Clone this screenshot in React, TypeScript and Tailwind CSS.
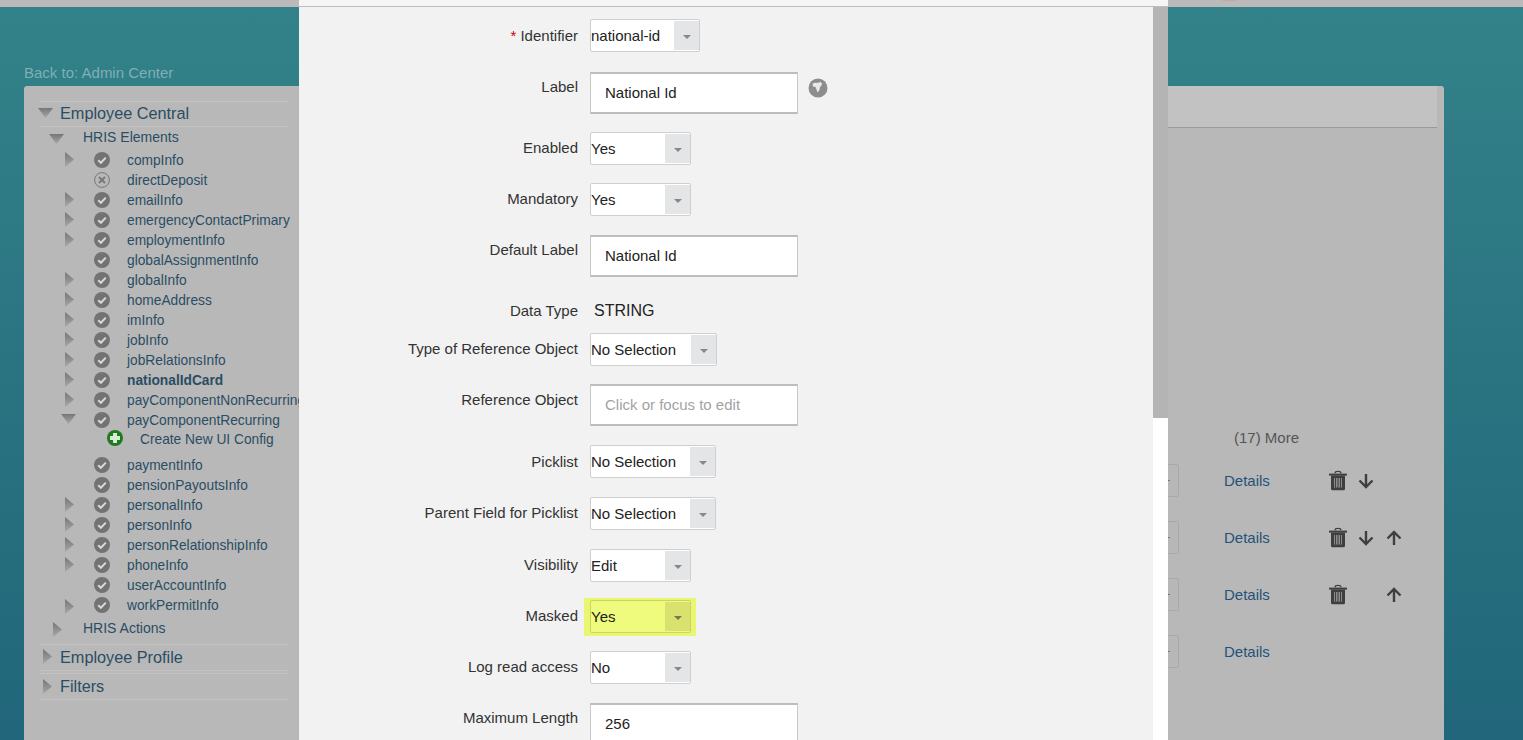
import React from "react";

const font = { fontFamily: '"Liberation Sans", Arial, sans-serif' };

const Tri = ({ dir, className }: { dir: "down" | "right"; className: string }) => (
  <svg className={`shrink-0 ${className}`} viewBox="0 0 16 16" preserveAspectRatio="none">
    <defs>
      <linearGradient id={"g" + dir} x1="0" y1="0" x2="0" y2="1">
        <stop offset="0" stopColor="#767676" />
        <stop offset="1" stopColor="#a8a8a8" />
      </linearGradient>
    </defs>
    {dir === "down" ? <path d="M0 0h16L8 16z" fill="url(#gdown)" /> : <path d="M0 0l16 8-16 8z" fill="url(#gright)" />}
  </svg>
);

const Check = () => (
  <svg className="w-4 h-4 shrink-0" viewBox="0 0 16 16">
    <circle cx="8" cy="8" r="8" fill="#737373" />
    <path d="M4.200 8.200l2.700 2.600 4.900-5.200" fill="none" stroke="#d8d8d8" strokeWidth="2" />
  </svg>
);

const Cross = () => (
  <svg className="w-4 h-4 shrink-0" viewBox="0 0 16 16">
    <circle cx="8" cy="8" r="7.400" fill="none" stroke="#777" strokeWidth="1" />
    <path d="M5 5l6 6M11 5l-6 6" stroke="#777" strokeWidth="1.800" />
  </svg>
);

const Trash = () => (
  <svg className="w-5 h-[21px]" viewBox="0 0 20 21">
    <path d="M7 3.200c0-2.400 6-2.400 6 0" fill="none" stroke="#3f3f3f" strokeWidth="1.200" />
    <path d="M1 3.600h18v2H1z" fill="#3f3f3f" />
    <path d="M3 5.500h14v13.200a1.600 1.600 0 0 1-1.600 1.600H4.600A1.600 1.600 0 0 1 3 18.700z" fill="#3f3f3f" />
    <path d="M6 8h8v9.500H6z" fill="#8c8c8c" />
    <path d="M7.500 8v9.500M10 8v9.500M12.500 8v9.500" stroke="#3f3f3f" strokeWidth="1" />
  </svg>
);

const Arrow = ({ up }: { up?: boolean }) => (
  <svg className="w-4 h-4" viewBox="0 0 16 16">
    <path
      d={up ? "M8 15V2M1.500 8.500L8 2l6.500 6.500" : "M8 1v13M1.500 7.500L8 14l6.500-6.500"}
      fill="none"
      stroke="#3f3f3f"
      strokeWidth="2.400"
    />
  </svg>
);

const Select = ({ value, w, hl }: { value: string; w: string; hl?: boolean }) => (
  <div className={`h-[33px] ${w} flex border rounded-[2px] ${hl ? "bg-[#eefb7d] border-[#c9d36a]" : "bg-white border-[#cfcfcf]"}`}>
    <div className="flex-1 flex items-center pt-[2px] text-[15px] text-[#222] overflow-hidden whitespace-nowrap">{value}</div>
    <div className={`w-[25px] my-[1px] flex items-center justify-center ${hl ? "bg-[#d9e26e]" : "bg-[#e3e5e7]"}`}>
      <div className={`w-0 h-0 mt-[2px] border-x-[4px] border-x-transparent border-t-[4px] ${hl ? "border-t-[#77794a]" : "border-t-[#888]"}`} />
    </div>
  </div>
);

const Input = ({ value, ph }: { value: string; ph?: boolean }) => (
  <div className={`h-[42px] w-[208px] bg-white border border-[#c9c9c9] border-t-2 border-b-2 border-t-[#bdbdbd] border-b-[#bdbdbd] pl-[14px] flex items-center text-[15px] ${ph ? "text-[#a3a3a3] pt-[1px]" : "text-[#222]"}`}>
    {value}
  </div>
);

const Row = ({ label, h, children, req, pt = "pt-2" }: { label: string; h: string; children: React.ReactNode; req?: boolean; pt?: string }) => (
  <div className={`flex ${h}`}>
    <div className={`w-[279px] text-right text-[15px] leading-4 text-[#333] whitespace-nowrap ${pt}`}>
      {req && <span className="text-[#c00]">* </span>}
      {label}
    </div>
    <div className="ml-[12px]">{children}</div>
  </div>
);

type Item = { name: string; tri?: "right" | "down"; icon?: "x"; bold?: boolean; low?: boolean };

const items: Item[] = [
  { name: "compInfo", tri: "right" },
  { name: "directDeposit", icon: "x" },
  { name: "emailInfo", tri: "right" },
  { name: "emergencyContactPrimary", tri: "right" },
  { name: "employmentInfo", tri: "right" },
  { name: "globalAssignmentInfo" },
  { name: "globalInfo", tri: "right" },
  { name: "homeAddress", tri: "right" },
  { name: "imInfo", tri: "right" },
  { name: "jobInfo", tri: "right" },
  { name: "jobRelationsInfo", tri: "right" },
  { name: "nationalIdCard", tri: "right", bold: true },
  { name: "payComponentNonRecurring", tri: "right" },
  { name: "payComponentRecurring", tri: "down" },
];

const items2: Item[] = [
  { name: "paymentInfo" },
  { name: "pensionPayoutsInfo" },
  { name: "personalInfo", tri: "right" },
  { name: "personInfo", tri: "right" },
  { name: "personRelationshipInfo", tri: "right" },
  { name: "phoneInfo", tri: "right" },
  { name: "userAccountInfo" },
  { name: "workPermitInfo", tri: "right", low: true },
];

const TreeRow = ({ item }: { item: Item }) => (
  <div className="h-5 flex items-center">
    <div className="w-[54px] pl-[25px] flex">
      {item.tri === "right" && <Tri dir="right" className={`w-[9px] h-[15px] ${item.low ? "mt-[3px]" : "-mt-[1px]"}`} />}
      {item.tri === "down" && <Tri dir="down" className="w-[15px] h-[10px] -ml-[4px] -mt-[2px]" />}
    </div>
    {item.icon === "x" ? <Cross /> : <Check />}
    <div className={`ml-[17px] mt-[2px] text-[13.75px] whitespace-nowrap text-[#2a4d63] ${item.bold ? "font-bold" : ""}`}>{item.name}</div>
  </div>
);

const DetailRow = ({ down, up, trash }: { down?: boolean; up?: boolean; trash?: boolean }) => (
  <div className="h-[57px] flex items-center">
    <div className="w-[11px] h-[33px] border border-l-0 border-[#a9a9a9] rounded-r-[2px] bg-[#b7b7b7] flex items-center">
      <div className="w-[2px] h-[1px] bg-[#777]" />
    </div>
    <div className="ml-[45px] w-[104px] mt-[2px] text-[15px] text-[#24527a]">Details</div>
    <div className="w-5 flex">{trash && <Trash />}</div>
    <div className="ml-[10px] w-[18px]">{down && <Arrow />}</div>
    <div className="ml-[10px] w-4">{up && <Arrow up />}</div>
  </div>
);

export default function App() {
  return (
    <div className="relative h-[740px] w-[1523px] overflow-hidden bg-gradient-to-b from-[#338289] to-[#21667a] text-[14px]" style={font}>
      <div className="h-[7px] bg-[#bababa]" />
      <div className="absolute left-[1222px] top-0 w-[14px] h-[1px] bg-[#c9a89a]" />
      <div className="ml-[24px] mt-[58px] text-[15px] leading-4 text-[#7fb0b5]">Back to: Admin Center</div>
      <div className="ml-[24px] mt-[5px] w-[1420px] h-[660px] bg-[#b8b8b8] rounded-t-[3px] flex">
        <div className="w-[248px] ml-[16px] pt-[15px]">
          <div className="border-t border-[#c4c4c4] h-[25px] flex items-center">
            <Tri dir="down" className="w-[15px] h-[10px] -ml-[2px] -mt-[2px]" />
            <span className="ml-[7px] -mt-[2px] text-[16.25px] text-[#2a4d63]">Employee Central</span>
          </div>
          <div className="border-t border-[#c4c4c4] h-[24px] flex items-center">
            <Tri dir="down" className="w-[15px] h-[10px] ml-[9px] mt-[1px]" />
            <span className="ml-[19px] text-[14px] text-[#2a4d63] -mt-[2px]">HRIS Elements</span>
          </div>
          <div className="w-[300px]">
            {items.map((i) => (
              <TreeRow key={i.name} item={i} />
            ))}
            <div className="h-[25px] flex items-start pl-[67px]">
              <svg className="w-4 h-4 mt-0 shrink-0" viewBox="0 0 16 16">
                <circle cx="8" cy="8" r="8" fill="#1f7a1f" />
                <path d="M6 3h4v3h3v4h-3v3H6v-3H3V6h3z" fill="#d7ecd7" />
              </svg>
              <span className="ml-[17px] mt-[2px] text-[13.75px] text-[#2a4d63] leading-4 whitespace-nowrap">Create New UI Config</span>
            </div>
            {items2.map((i) => (
              <TreeRow key={i.name} item={i} />
            ))}
          </div>
          <div className="h-[26px] flex items-center">
            <Tri dir="right" className="w-[9px] h-[15px] ml-[13px] mt-[2px]" />
            <span className="ml-[21px] text-[14px] text-[#2a4d63]">HRIS Actions</span>
          </div>
          <div className="mt-[3px] border-t border-b border-[#c4c4c4] h-[27px] flex items-center">
            <Tri dir="right" className="w-[9px] h-[15px] ml-[3px] -mt-[3px]" />
            <span className="ml-[8px] text-[16.25px] text-[#2a4d63]">Employee Profile</span>
          </div>
          <div className="mt-[2px] border-t border-b border-[#c4c4c4] h-[27px] flex items-center">
            <Tri dir="right" className="w-[9px] h-[15px] ml-[3px] -mt-[1px]" />
            <span className="ml-[8px] text-[16.25px] text-[#2a4d63]">Filters</span>
          </div>
        </div>
      </div>

      <div className="absolute left-[299px] top-0 w-[869px] h-[740px] flex flex-col bg-white">
        <div className="h-[7px] border-b border-[#bdbdbd] bg-[#f5f5f5]" />
        <div className="flex flex-1 min-h-0">
          <div className="w-[854px] bg-[#f2f2f2] pt-3 overflow-hidden">
            <Row label="Identifier" h="h-[53px]" req pt="pt-[9px]">
              <Select value="national-id" w="w-[110px]" />
            </Row>
            <Row label="Label" h="h-[60px]" pt="pt-[7px]">
              <div className="flex">
                <Input value="National Id" />
                <svg className="w-5 h-5 ml-[10px] mt-[6px]" viewBox="0 0 20 20">
                  <circle cx="10" cy="10" r="9.500" fill="#8d8d8d" />
                  <path d="M4.500 6c1.500-1.500 3-1.500 4.500-1l3.500-1 1.500 1.500-.5 2-1.500 1.500-.5 3-2 2.500-1-3-1-2.500-2.500-.5z" fill="#e8e8e8" />
                </svg>
              </div>
            </Row>
            <Row label="Enabled" h="h-[51px]">
              <Select value="Yes" w="w-[101px]" />
            </Row>
            <Row label="Mandatory" h="h-[52px]">
              <Select value="Yes" w="w-[101px]" />
            </Row>
            <Row label="Default Label" h="h-[68px]" pt="pt-[7px]">
              <Input value="National Id" />
            </Row>
            <Row label="Data Type" h="h-[30px]" pt="pt-0">
              <div className="pl-[4px] text-[16px] leading-4 text-[#222]">STRING</div>
            </Row>
            <Row label="Type of Reference Object" h="h-[51px]">
              <Select value="No Selection" w="w-[127px]" />
            </Row>
            <Row label="Reference Object" h="h-[61px]" pt="pt-[8px]">
              <Input value="Click or focus to edit" ph />
            </Row>
            <Row label="Picklist" h="h-[52px]" pt="pt-[9px]">
              <Select value="No Selection" w="w-[126px]" />
            </Row>
            <Row label="Parent Field for Picklist" h="h-[52px]">
              <Select value="No Selection" w="w-[126px]" />
            </Row>
            <Row label="Visibility" h="h-[51px]">
              <Select value="Edit" w="w-[101px]" />
            </Row>
            <Row label="Masked" h="h-[51px]">
              <div className="relative">
                <div className="absolute -left-[6px] -top-[2px] w-[112px] h-[38px] bg-[#e9f66f]" />
                <div className="relative">
                  <Select value="Yes" w="w-[101px]" hl />
                </div>
              </div>
            </Row>
            <Row label="Log read access" h="h-[52px]">
              <Select value="No" w="w-[101px]" />
            </Row>
            <Row label="Maximum Length" h="h-[60px]" pt="pt-[7px]">
              <Input value="256" />
            </Row>
          </div>
          <div className="w-[15px] h-[411px] bg-[#b4b4b4]" />
        </div>
      </div>

      <div className="absolute left-[1168px] top-[86px] w-[276px] h-[654px] flex flex-col">
        <div className="h-[42px] mr-[7px] border-b border-[#9a9a9a] bg-[#c2c2c2]" />
        <div className="mt-[302px] ml-[66px] text-[15px] text-[#555] leading-4">(17) More</div>
        <div className="mt-[6px]">
          <DetailRow down trash />
          <DetailRow down up trash />
          <DetailRow up trash />
          <DetailRow />
        </div>
      </div>
    </div>
  );
}
